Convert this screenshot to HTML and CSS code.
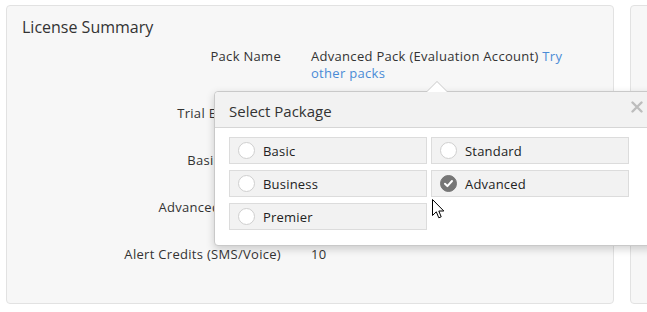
FILE: index.html
```html
<!DOCTYPE html>
<html lang="en">

<head>
    <meta charset="UTF-8">
    <meta name="viewport" content="width=device-width, initial-scale=1.0">
    <title>License Summary</title>
    <link rel="stylesheet" href="styles.css">
</head>

<body>

    <div class="pagina">
        <div class="tarjeta">
            <h2 class="titulo">License Summary</h2>

            <div class="filas">
                <div class="fila fila-pack">
                    <div class="etiqueta">Pack Name</div>
                    <div class="valor">Advanced Pack (Evaluation Account) <a href="#" class="enlace">Try other packs</a></div>
                </div>
                <div class="fila">
                    <div class="etiqueta">Trial Expiry Date</div>
                    <div class="valor"></div>
                </div>
                <div class="fila">
                    <div class="etiqueta">Basic Monitors</div>
                    <div class="valor"></div>
                </div>
                <div class="fila">
                    <div class="etiqueta">Advanced Monitors</div>
                    <div class="valor"></div>
                </div>
                <div class="fila">
                    <div class="etiqueta">Alert Credits (SMS/Voice)</div>
                    <div class="valor">10</div>
                </div>
            </div>
        </div>

        <div class="tarjeta tarjeta-lateral"></div>

        <div class="popup">
            <div class="popup-cabecera">
                <span>Select Package</span>
                <svg class="cerrar" width="12" height="12" viewBox="0 0 12 12">
                    <path d="M1.5 1.5 L10.5 10.5 M10.5 1.5 L1.5 10.5" stroke="#bdbdbd" stroke-width="2.4" stroke-linecap="round" />
                </svg>
            </div>
            <div class="opciones">
                <div class="opcion"><span class="radio"></span>Basic</div>
                <div class="opcion"><span class="radio"></span>Standard</div>
                <div class="opcion"><span class="radio"></span>Business</div>
                <div class="opcion"><span class="radio marcado">
                        <svg width="17" height="17" viewBox="0 0 17 17">
                            <path d="M5 8.8 L7.4 11.1 L12 6" fill="none" stroke="#fff" stroke-width="2" stroke-linecap="round" stroke-linejoin="round" />
                        </svg>
                    </span>Advanced</div>
                <div class="opcion"><span class="radio"></span>Premier</div>
            </div>
        </div>

        <svg class="cursor" width="13" height="21" viewBox="0 0 13 21">
            <path d="M0.5 0.5 L0.5 16.5 L4.3 12.8 L6.8 18.8 L9.2 17.8 L6.8 12 L11.8 12 Z" fill="#fff" stroke="#000" stroke-width="1" stroke-linejoin="miter" />
        </svg>
    </div>

</body>

</html>
```

FILE: styles.css
```css
body {
    margin: 0;
    font-family: "Open Sans", Arial, sans-serif;
    font-size: 13px;
    letter-spacing: 0.3px;
    color: #333;
    background-color: #fff;
    overflow: hidden;
}

.pagina {
    position: relative;
    display: flex;
    gap: 16px;
    padding: 5px 0 0 6px;
    width: 700px;
}

.tarjeta {
    width: 606px;
    height: 297px;
    background-color: #f7f7f7;
    border: 1px solid #e2e2e2;
    border-radius: 4px;
    flex-shrink: 0;
}

.tarjeta-lateral {
    width: 100px;
}

.titulo {
    margin: 0;
    padding: 11px 15px 0;
    font-size: 16px;
    font-weight: normal;
    letter-spacing: 0;
    line-height: 20px;
}

.filas {
    display: flex;
    flex-direction: column;
    gap: 30px;
    margin-top: 11px;
}

.fila {
    display: flex;
    gap: 30px;
    line-height: 17px;
}

.fila-pack {
    margin-bottom: -7px;
}

.etiqueta {
    width: 274px;
    text-align: right;
}

.valor {
    width: 266px;
}

.enlace {
    color: #4a8bd6;
    text-decoration: none;
}

.popup {
    position: absolute;
    left: 214px;
    top: 91px;
    width: 440px;
    background-color: #fff;
    border: 1px solid #c9c9c9;
    border-radius: 4px;
    box-shadow: 0 3px 8px rgba(0, 0, 0, 0.18);
    padding-bottom: 15px;
    letter-spacing: 0.2px;
}

.popup::before,
.popup::after {
    content: "";
    position: absolute;
    left: 211px;
    border-style: solid;
    border-color: transparent;
}

.popup::before {
    top: -11px;
    border-width: 0 11px 11px;
    border-bottom-color: #c9c9c9;
}

.popup::after {
    top: -10px;
    left: 212px;
    border-width: 0 10px 10px;
    border-bottom-color: #fff;
}

.popup-cabecera {
    display: flex;
    justify-content: space-between;
    align-items: center;
    height: 35px;
    padding: 0 12px 0 14px;
    background-color: #f2f2f2;
    border-bottom: 1px solid #d6d6d6;
    border-radius: 4px 4px 0 0;
    font-size: 15px;
    letter-spacing: 0;
    color: #333;
}

.popup-cabecera span {
    padding-top: 3px;
}

.cerrar {
    margin-top: -5px;
}

.opciones {
    display: grid;
    grid-template-columns: 198px 198px;
    column-gap: 4px;
    row-gap: 6px;
    padding: 9px 0 0 14px;
}

.opcion {
    display: flex;
    align-items: center;
    gap: 8px;
    height: 25px;
    padding-left: 8px;
    background-color: #f2f2f2;
    border: 1px solid #dcdcdc;
    color: #222;
}

.radio {
    display: block;
    width: 17px;
    height: 17px;
    box-sizing: border-box;
    border: 1px solid #cfcfcf;
    border-radius: 50%;
    background-color: #fff;
}

.radio.marcado {
    background-color: #767676;
    border-color: #767676;
}

.radio.marcado svg {
    display: block;
    margin: -1px;
}

.cursor {
    position: absolute;
    left: 432px;
    top: 199px;
}
```
